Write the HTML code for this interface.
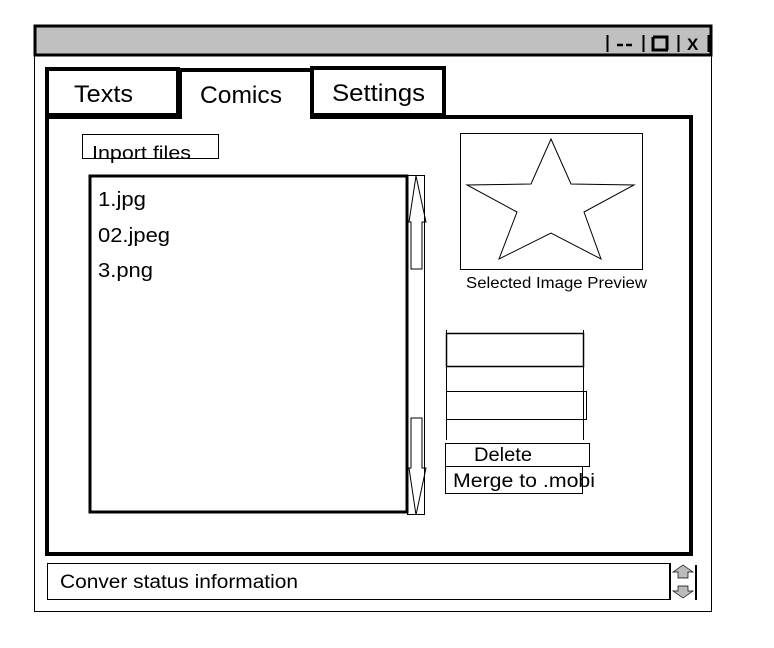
<!DOCTYPE html>
<html><head><style>
html,body{margin:0;padding:0;background:#fff;width:774px;height:648px;overflow:hidden}
svg text{font-family:"Liberation Sans",sans-serif;fill:#000}
</style></head><body>
<svg width="774" height="648" viewBox="0 0 774 648" xmlns="http://www.w3.org/2000/svg">
<rect x="34.5" y="26.5" width="677" height="585" fill="#fff" stroke="#000" stroke-width="1"/>
<rect x="35" y="26" width="676" height="29" fill="#c0c0c0" stroke="#000" stroke-width="3"/>
<line x1="607.5" y1="35" x2="607.5" y2="52" stroke="#000" stroke-width="2"/>
<line x1="617" y1="45" x2="623" y2="45" stroke="#000" stroke-width="2.5"/>
<line x1="626" y1="45" x2="632" y2="45" stroke="#000" stroke-width="2.5"/>
<line x1="643.5" y1="35" x2="643.5" y2="52" stroke="#000" stroke-width="2"/>
<path d="M653 37 H667 V50 M653 37 V50 H668" fill="none" stroke="#000" stroke-width="3"/>
<line x1="678.5" y1="35" x2="678.5" y2="52" stroke="#000" stroke-width="2"/>
<text x="687" y="50" font-size="17" font-weight="bold">X</text>
<line x1="708.5" y1="35" x2="708.5" y2="52" stroke="#000" stroke-width="2"/>
<rect x="47" y="117" width="644" height="437" fill="#fff" stroke="#000" stroke-width="4"/>
<rect x="47" y="69" width="131" height="46" fill="#fff" stroke="#000" stroke-width="4"/>
<rect x="312" y="68" width="132" height="47" fill="#fff" stroke="#000" stroke-width="4"/>
<path d="M180 119 V70 H312 V119" fill="#fff" stroke="#000" stroke-width="4"/>
<rect x="182" y="113" width="128" height="8" fill="#fff"/>
<text x="74" y="102" font-size="24" textLength="59" lengthAdjust="spacingAndGlyphs">Texts</text>
<text x="200" y="103" font-size="24" textLength="82" lengthAdjust="spacingAndGlyphs">Comics</text>
<text x="332" y="101" font-size="24" textLength="93" lengthAdjust="spacingAndGlyphs">Settings</text>
<rect x="82.5" y="134.5" width="136" height="24" fill="none" stroke="#000"/>
<text x="92" y="159" font-size="18" textLength="99" lengthAdjust="spacingAndGlyphs">Inport files</text>
<rect x="90" y="176" width="317" height="336" fill="#fff" stroke="#000" stroke-width="3"/>
<text x="98" y="206" font-size="20" textLength="48" lengthAdjust="spacingAndGlyphs">1.jpg</text>
<text x="98" y="242" font-size="20" textLength="72" lengthAdjust="spacingAndGlyphs">02.jpeg</text>
<text x="98" y="277" font-size="20" textLength="55" lengthAdjust="spacingAndGlyphs">3.png</text>
<rect x="407.5" y="175.5" width="17" height="339" fill="none" stroke="#000"/>
<path d="M416 176 L409 222 H411 V269 H422 V222 H426 Z" fill="none" stroke="#000"/>
<path d="M416 515 L409 468 H411 V418 H422 V468 H426 Z" fill="none" stroke="#000"/>
<rect x="460.5" y="133.5" width="182" height="136" fill="none" stroke="#000"/>
<path d="M551 139 L571 184 L634 185 L584 212 L601 259 L551 233 L499 259 L517 212 L467 185 L531 184 Z" fill="none" stroke="#000"/>
<text x="466" y="288" font-size="16" textLength="181" lengthAdjust="spacingAndGlyphs">Selected Image Preview</text>
<rect x="446.5" y="333.5" width="137" height="33" fill="none" stroke="#000" stroke-width="1.5"/>
<line x1="446.5" y1="330" x2="446.5" y2="440" stroke="#000"/>
<line x1="583.5" y1="330" x2="583.5" y2="440" stroke="#000"/>
<rect x="446.5" y="391.5" width="140" height="28" fill="none" stroke="#000"/>
<rect x="445.5" y="443.5" width="144" height="23" fill="none" stroke="#000"/>
<rect x="445.5" y="466.5" width="137" height="27" fill="none" stroke="#000"/>
<text x="474" y="461" font-size="19" textLength="58" lengthAdjust="spacingAndGlyphs">Delete</text>
<text x="453" y="487" font-size="19" textLength="142" lengthAdjust="spacingAndGlyphs">Merge to .mobi</text>
<rect x="47.5" y="563.5" width="622" height="36" fill="none" stroke="#000"/>
<text x="60" y="588" font-size="19" textLength="238" lengthAdjust="spacingAndGlyphs">Conver status information</text>
<line x1="670" y1="563" x2="670" y2="600" stroke="#000" stroke-width="2"/>
<line x1="696" y1="565" x2="696" y2="600" stroke="#000" stroke-width="2"/>
<path d="M683 565 L673 572 H678 V578 H688 V572 H693 Z" fill="#bbb" stroke="#000" stroke-width="0.7"/>
<path d="M683 598 L673 591 H678 V586 H688 V591 H693 Z" fill="#bbb" stroke="#000" stroke-width="0.7"/>
</svg>
</body></html>
